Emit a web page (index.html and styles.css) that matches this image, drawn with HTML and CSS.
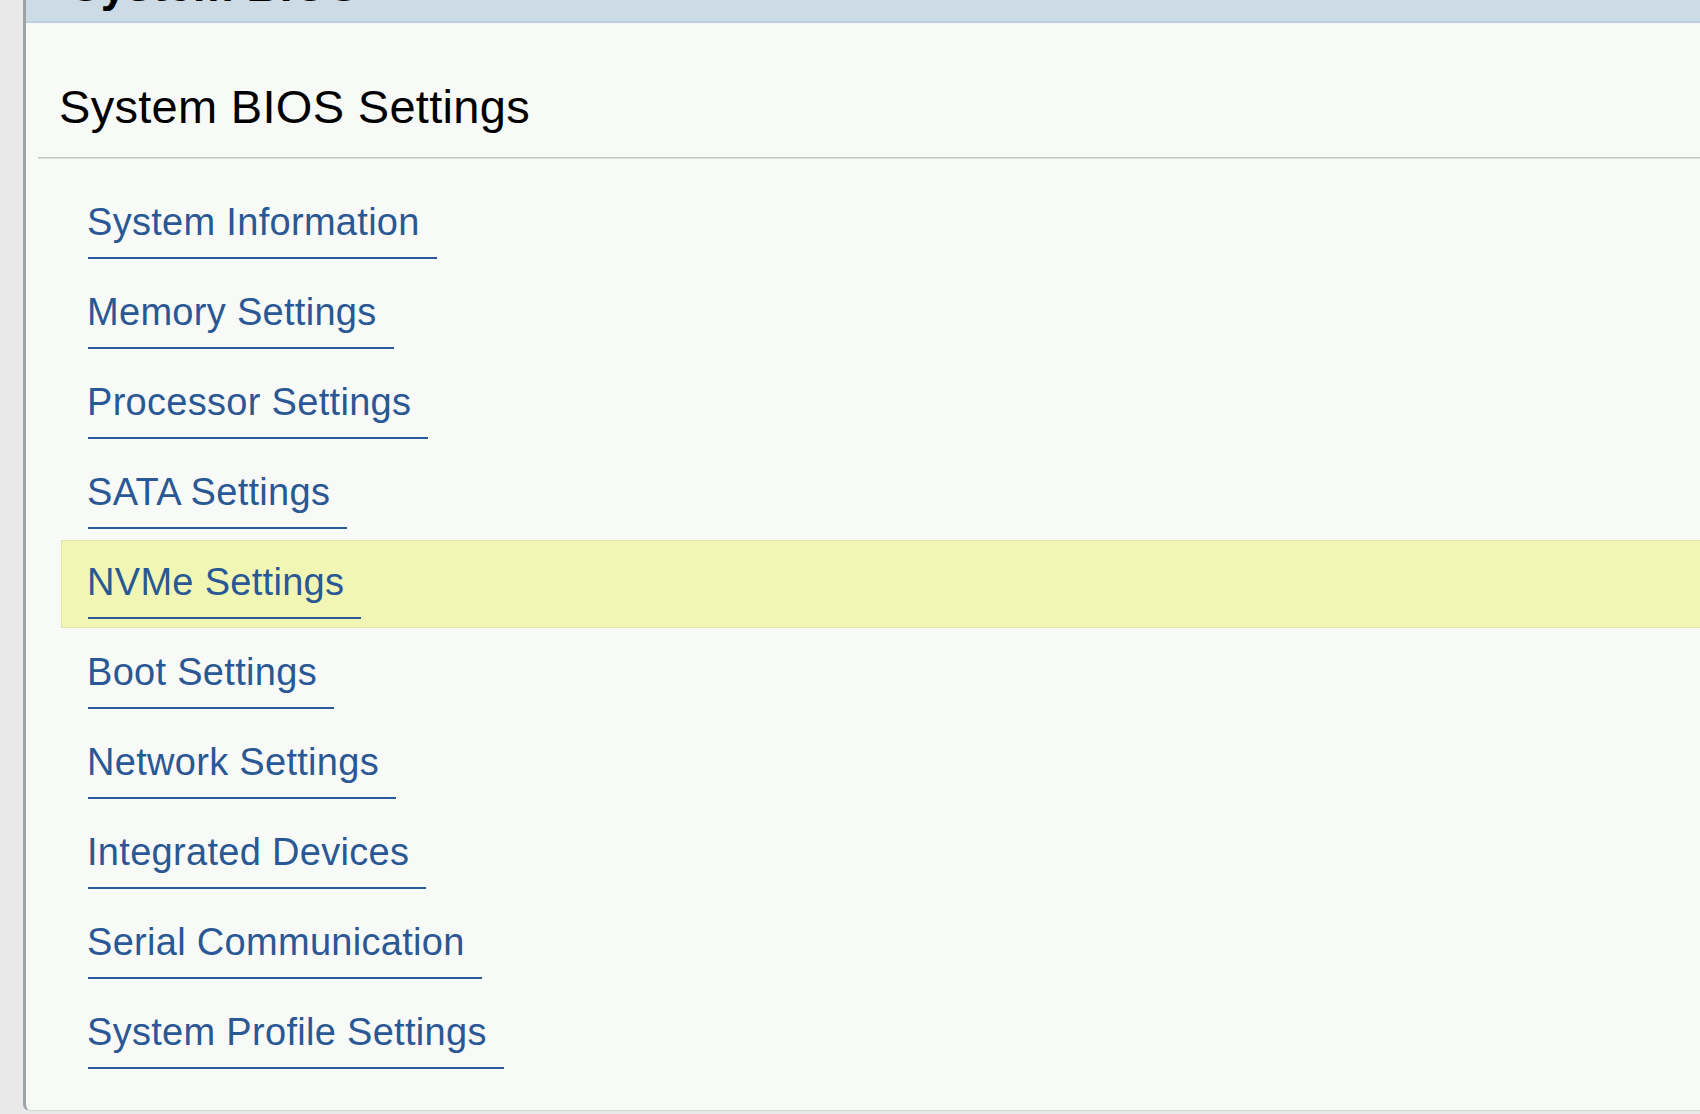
FILE: index.html
```html
<!DOCTYPE html>
<html lang="en">
<head>
<meta charset="utf-8">
<title>System BIOS Settings</title>
<link rel="stylesheet" href="styles.css">
</head>
<body>
<div class="panel">
  <div class="topbar"><span class="topbar-title">System BIOS</span></div>
  <h1 class="heading">System BIOS Settings</h1>
  <div class="separator"></div>
  <ul class="menu">
    <li class="row"><a class="link">System Information</a></li>
    <li class="row"><a class="link">Memory Settings</a></li>
    <li class="row"><a class="link">Processor Settings</a></li>
    <li class="row"><a class="link">SATA Settings</a></li>
    <li class="row row-active"><a class="link">NVMe Settings</a></li>
    <li class="row"><a class="link">Boot Settings</a></li>
    <li class="row"><a class="link">Network Settings</a></li>
    <li class="row"><a class="link">Integrated Devices</a></li>
    <li class="row"><a class="link">Serial Communication</a></li>
    <li class="row"><a class="link">System Profile Settings</a></li>
  </ul>
</div>
</body>
</html>
```
FILE: styles.css
```css
html, body {
  margin: 0;
  padding: 0;
}
body {
  background: #e9e9e9;
  font-family: "Liberation Sans", Arial, sans-serif;
  width: 1700px;
  height: 1114px;
  overflow: hidden;
}
.panel {
  margin-left: 23px;
  height: 1111px;
  box-sizing: border-box;
  background: #f8faf7;
  border-left: 3px solid #9ca3a8;
  border-bottom: 1px solid #d6d8d5;
  border-bottom-left-radius: 7px;
  overflow: hidden;
}
.topbar {
  height: 21px;
  background: #cddbe6;
  border-bottom: 2px solid #bfcde0;
  overflow: hidden;
  padding-left: 44px;
}
.topbar-title {
  display: block;
  font-size: 46px;
  font-weight: bold;
  line-height: 46px;
  margin-top: -38px;
  color: #000;
}
.heading {
  margin: 57px 0 0 33px;
  font-size: 47px;
  font-weight: normal;
  letter-spacing: 0.3px;
  line-height: 54px;
  height: 54px;
  color: #000;
}
.separator {
  margin: 23px 0 0 12px;
  height: 1px;
  background: #c4c6c2;
  border-bottom: 1px solid #dcdedb;
}
.menu {
  list-style: none;
  margin: 21px 0 0 35px;
  padding: 0;
}
.row {
  box-sizing: border-box;
  height: 88px;
  margin-bottom: 2px;
  padding-left: 26px;
  border: 1px solid transparent;
  border-right: none;
}
.row-active {
  background: #f2f6b5;
  border-color: #e4e9a0;
}
.link {
  display: inline-block;
  margin-top: 19px;
  padding: 0 17px 13px 0;
  font-size: 38px;
  letter-spacing: 0.3px;
  text-indent: -1px;
  line-height: 44px;
  color: #2a5894;
  border-bottom: 2px solid #2c5a98;
  text-decoration: none;
}
```
